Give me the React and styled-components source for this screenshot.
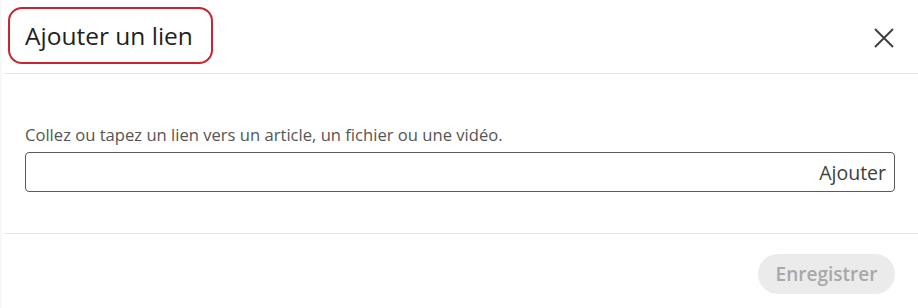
import React from "react";
import styled, { createGlobalStyle } from "styled-components";

const Global = createGlobalStyle`
  html, body { margin: 0; padding: 0; background: #fff; }
  body { font-family: "Open Sans", "Noto Sans", sans-serif; }
  * { box-sizing: border-box; }
`;

const Dialog = styled.div`
  width: 918px;
  height: 308px;
  background: #fff;
  display: flex;
  flex-direction: column;
  padding-left: 2px;
  border-left: 2px solid #f7f7f7;
`;

const Header = styled.div`
  height: 74px;
  display: flex;
  align-items: flex-start;
  justify-content: space-between;
  padding: 0 23px 0 4px;
  border-bottom: 1px solid #e6e6e6;
`;

const TitleMark = styled.div`
  border: 2px solid #cc2330;
  border-radius: 14px;
  height: 57px;
  margin-top: 7px;
  padding: 0 18px 0 15px;
  display: flex;
  align-items: center;
`;

const Title = styled.h2`
  margin: 0;
  font-size: 24.5px;
  font-weight: 400;
  color: #1f1f1f;
`;

const CloseButton = styled.button`
  border: none;
  background: transparent;
  padding: 0;
  width: 22px;
  height: 22px;
  display: flex;
  align-items: center;
  justify-content: center;
  margin-top: 27px;
`;

const Body = styled.div`
  height: 160px;
  padding: 50px 23px 0 21px;
  border-bottom: 1px solid #e6e6e6;
  display: flex;
  flex-direction: column;
`;

const Label = styled.label`
  font-size: 16.6px;
  color: #555;
  line-height: 22px;
  margin-bottom: 6px;
`;

const InputBox = styled.div`
  height: 40px;
  border: 1px solid #5a5a5a;
  border-radius: 4px;
  display: flex;
  align-items: center;
  justify-content: flex-end;
  padding: 0 8px;
`;

const Field = styled.input`
  flex: 1;
  border: none;
  outline: none;
  background: transparent;
  font: inherit;
`;

const AddText = styled.span`
  font-size: 19.5px;
  font-weight: 500;
  color: #404040;
`;

const Footer = styled.div`
  flex: 1;
  display: flex;
  align-items: flex-start;
  justify-content: flex-end;
  padding: 20px 23px 0 0;
`;

const SaveButton = styled.button`
  border: none;
  background: #ebebeb;
  color: #a8a8a8;
  font-family: inherit;
  font-size: 19px;
  font-weight: 600;
  height: 40px;
  width: 137px;
  padding: 0;
  border-radius: 20px;
`;

export default function App() {
  return (
    <>
      <Global />
      <Dialog>
        <Header>
          <TitleMark>
            <Title>Ajouter un lien</Title>
          </TitleMark>
          <CloseButton aria-label="Fermer">
            <svg width="20" height="20" viewBox="0 0 20 20">
              <path d="M1 1 L19 19 M19 1 L1 19" stroke="#404040" strokeWidth="2" strokeLinecap="butt" />
            </svg>
          </CloseButton>
        </Header>
        <Body>
          <Label>Collez ou tapez un lien vers un article, un fichier ou une vidéo.</Label>
          <InputBox>
            <Field />
            <AddText>Ajouter</AddText>
          </InputBox>
        </Body>
        <Footer>
          <SaveButton disabled>Enregistrer</SaveButton>
        </Footer>
      </Dialog>
    </>
  );
}
